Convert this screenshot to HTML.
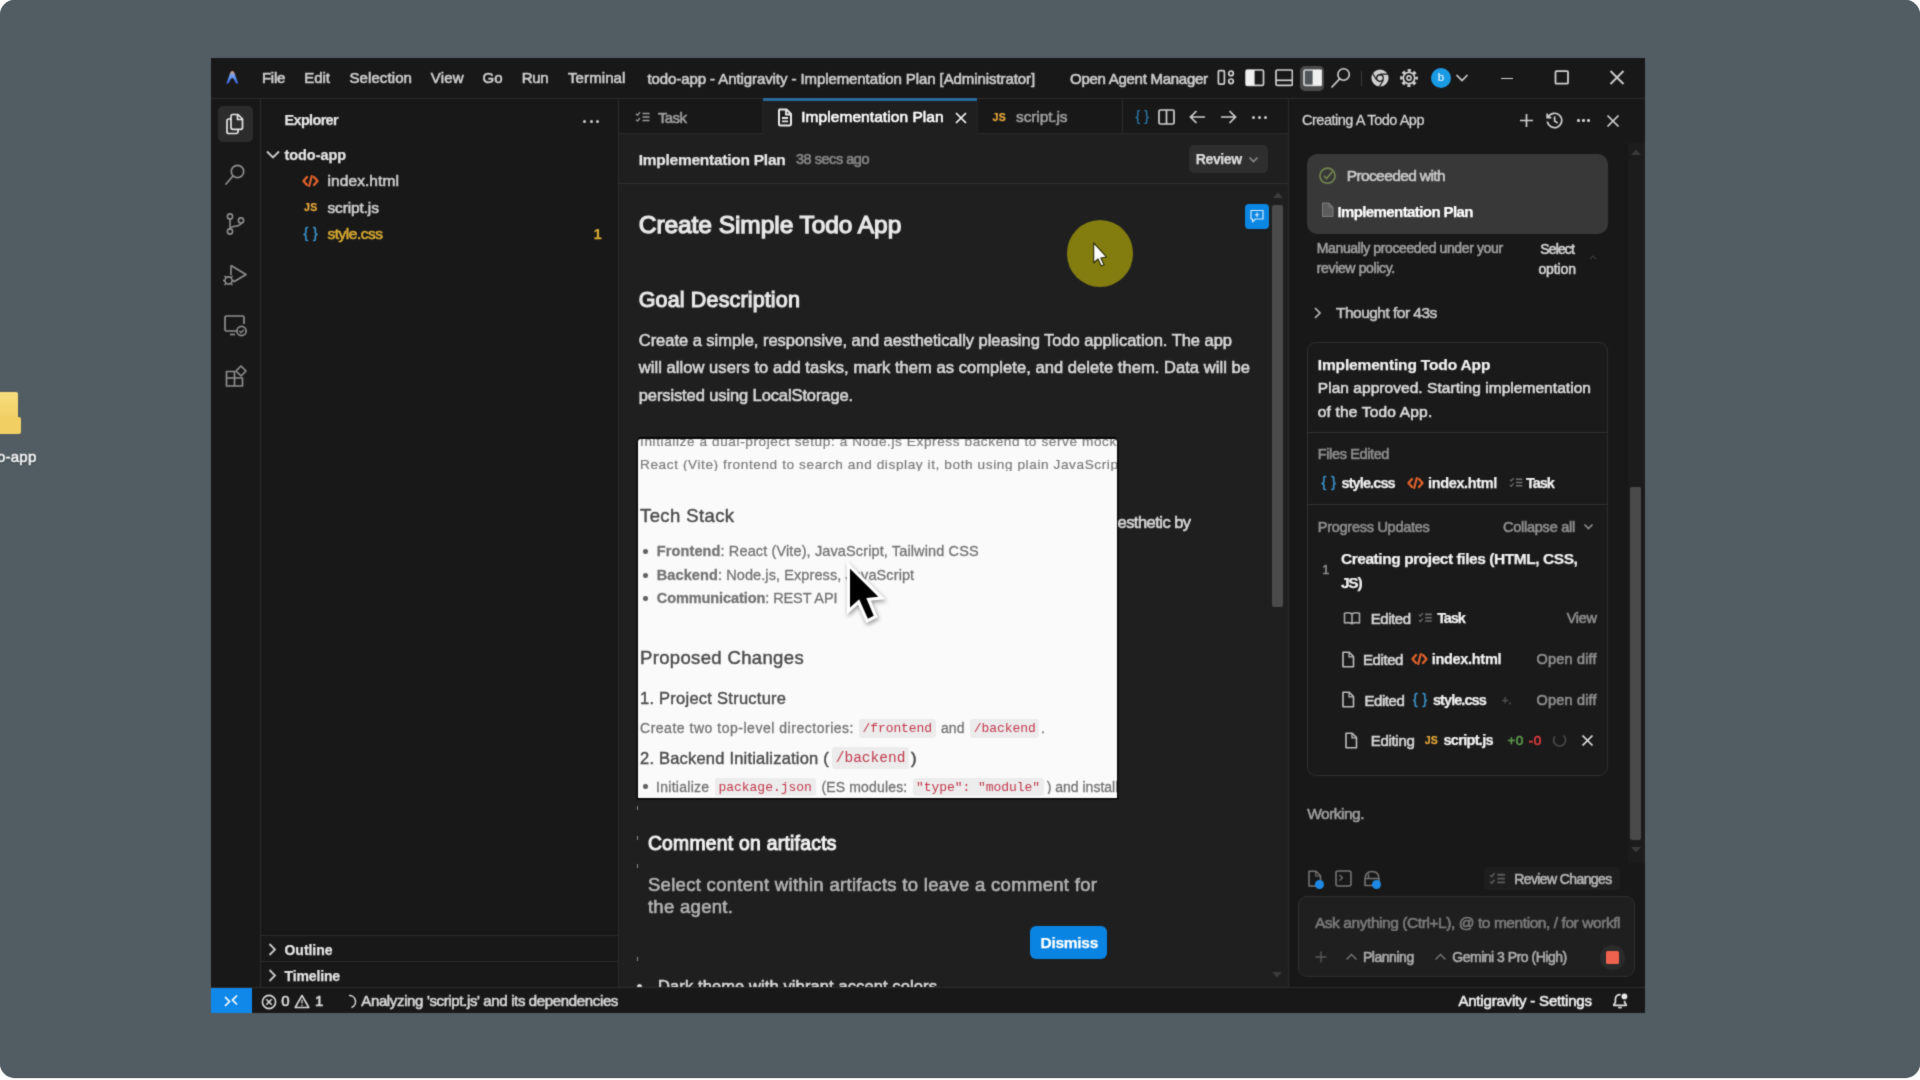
<!DOCTYPE html>
<html lang="en"><head><meta charset="utf-8"><title>todo-app - Antigravity - Implementation Plan</title>
<style>
html,body{margin:0;padding:0;background:#fff;}
body{width:1920px;height:1080px;position:relative;overflow:hidden;font-family:"Liberation Sans", sans-serif;}
.t{position:absolute;white-space:nowrap;line-height:1;display:block;-webkit-text-stroke:0.62px;}
.tb{-webkit-text-stroke:0.25px;}
#all{position:absolute;left:0;top:0;width:1920px;height:1080px;filter:url(#bl);}
.t b{font-weight:bold;}
</style></head><body>

<div style="position:absolute;left:0;top:0;width:1920px;height:1078.3px;background:#515d62;border-radius:15px;"></div>
<svg width="0" height="0" style="position:absolute"><filter id="bl" x="0" y="0" width="100%" height="100%" color-interpolation-filters="sRGB"><feConvolveMatrix order="3" kernelMatrix="0.0225 0.1050 0.0225 0.1050 0.4900 0.1050 0.0225 0.1050 0.0225" divisor="1" edgeMode="duplicate" preserveAlpha="false"/></filter></svg>
<div id="all">
<div style="position:absolute;left:0;top:0;width:1920px;height:1078.3px;background:#515d62;border-radius:15px;"></div>
<div style="position:absolute;left:-30px;top:392px;width:48px;height:41px;background:linear-gradient(180deg,#f7dd7c,#eec95a);border-radius:2px;"></div>
<div style="position:absolute;left:-30px;top:417px;width:50.5px;height:16.5px;background:#f1cf63;border-radius:0 2px 2px 0;"></div>
<div style="position:absolute;left:210.5px;top:57.5px;width:1434.5px;height:955px;background:#181818;"></div>
<div style="position:absolute;left:210.5px;top:98px;width:1434.5px;height:1px;background:#2b2b2b;"></div>
<div style="position:absolute;left:259.5px;top:98.5px;width:1px;height:889px;background:#2b2b2b;"></div>
<div style="position:absolute;left:617.5px;top:98.5px;width:1px;height:889px;background:#2b2b2b;"></div>
<div style="position:absolute;left:1287.5px;top:98.5px;width:1px;height:889px;background:#2b2b2b;"></div>
<div style="position:absolute;left:210.5px;top:987px;width:1434.5px;height:1px;background:#2b2b2b;"></div>
<div style="position:absolute;left:618.5px;top:99px;width:669px;height:888px;background:#1f1f1f;"></div>
<div style="position:absolute;left:618.5px;top:99px;width:669px;height:34px;background:#181818;"></div>
<div style="position:absolute;left:618.5px;top:132.5px;width:669px;height:1px;background:#2b2b2b;"></div>
<div style="position:absolute;left:762.5px;top:99px;width:214.5px;height:34.5px;background:#1f1f1f;"></div>
<div style="position:absolute;left:762.5px;top:98.4px;width:214.5px;height:2.2px;background:#2a6a9c;"></div>
<div style="position:absolute;left:762px;top:100.5px;width:1px;height:32px;background:#232323;"></div>
<div style="position:absolute;left:977px;top:100.5px;width:1px;height:32px;background:#232323;"></div>
<div style="position:absolute;left:1121.5px;top:99px;width:1px;height:34px;background:#2b2b2b;"></div>
<div style="position:absolute;left:618.5px;top:133.5px;width:669px;height:49px;background:#1f1f1f;"></div>
<div style="position:absolute;left:618.5px;top:182.5px;width:669px;height:1px;background:#2e2e2e;"></div>
<svg style="position:absolute;left:223.6px;top:69.6px;opacity:.95;" width="16.6" height="15" viewBox="0 0 18 17" fill="none"><defs><linearGradient id="lg" x1="0" y1="0" x2="0" y2="1"><stop offset="0" stop-color="#e8a27a"/><stop offset=".35" stop-color="#7aa7ff"/><stop offset="1" stop-color="#2f6df2"/></linearGradient></defs><path d="M9 1.2C10.6 1.2 11.4 3 12.2 5.6L15.8 15.6C14 15.9 12.9 14.6 11.8 12.4C10.9 10.6 10.2 9 9 9C7.8 9 7.1 10.6 6.2 12.4C5.1 14.6 4 15.9 2.2 15.6L5.8 5.6C6.6 3 7.4 1.2 9 1.2Z" fill="url(#lg)"/></svg>
<svg style="position:absolute;left:1217px;top:69px;" width="18" height="17" viewBox="0 0 18 17" fill="none"><rect x="1.4" y="1.6" width="6" height="13.6" rx="1.2" stroke="#d0d0d0" stroke-width="1.7"/><circle cx="14" cy="4.4" r="2.3" stroke="#d0d0d0" stroke-width="1.7"/><circle cx="14" cy="12.3" r="2.3" stroke="#d0d0d0" stroke-width="1.7"/></svg>
<svg style="position:absolute;left:1245px;top:69px;" width="19.5" height="17.5" viewBox="0 0 19.5 17.5" fill="none"><rect x="1" y="1" width="17.5" height="15.4" rx="1.5" stroke="#d0d0d0" stroke-width="1.7"/><rect x="1" y="1" width="8.6" height="15.4" fill="#f0f0f0"/></svg>
<svg style="position:absolute;left:1274.5px;top:69px;" width="18.5" height="17.5" viewBox="0 0 18.5 17.5" fill="none"><rect x="1" y="1" width="16.4" height="15.4" rx="1.5" stroke="#d0d0d0" stroke-width="1.7"/><path d="M1 11.3H17.4" stroke="#d0d0d0" stroke-width="1.7"/></svg>
<div style="position:absolute;left:1299.6px;top:66.2px;width:24.6px;height:24.4px;background:#4b4b4b;border-radius:5px;"></div>
<svg style="position:absolute;left:1302.8px;top:69px;" width="19.5" height="17.5" viewBox="0 0 19.5 17.5" fill="none"><rect x="1" y="1" width="17.5" height="15.4" rx="1.5" fill="#4f5559" stroke="#d0d0d0" stroke-width="1.7"/><rect x="9.6" y="1" width="8.9" height="15.4" fill="#f0f0f0"/></svg>
<svg style="position:absolute;left:1330px;top:67px;" width="21" height="22" viewBox="0 0 21 22" fill="none"><circle cx="13.6" cy="7.5" r="5.7" stroke="#d0d0d0" stroke-width="1.6"/><path d="M9.6 11.8L2 20" stroke="#d0d0d0" stroke-width="1.7" stroke-linecap="round"/></svg>
<div style="position:absolute;left:1361px;top:71px;width:1px;height:15px;background:#3c3c3c;"></div>
<svg style="position:absolute;left:1370px;top:68px;" width="20" height="20" viewBox="0 0 20 20" fill="none"><circle cx="10" cy="10" r="8.6" fill="#d0d0d0"/><circle cx="10" cy="10" r="3.9" fill="#1a1a1a"/><circle cx="10" cy="10" r="2.6" fill="#d0d0d0"/><path d="M10 6.1H18M6.6 12L2.6 5.2M13.4 12L9.4 18.6" stroke="#1a1a1a" stroke-width="1.2"/></svg>
<svg style="position:absolute;left:1398.8px;top:67.8px;" width="20" height="20" viewBox="0 0 20 20" fill="none"><circle cx="10" cy="10" r="7.6" stroke="#d0d0d0" stroke-width="2.6" stroke-dasharray="3.2 2.77" stroke-dashoffset="1.6"/><circle cx="10" cy="10" r="5.7" stroke="#d0d0d0" stroke-width="1.7"/><circle cx="10" cy="10" r="2.1" stroke="#d0d0d0" stroke-width="1.6"/></svg>
<div style="position:absolute;left:1431px;top:68px;width:20px;height:20px;background:#1a9be6;border-radius:50%;"></div>
<svg style="position:absolute;left:1455px;top:73px;" width="14" height="10" viewBox="0 0 14 10" fill="none"><path d="M1.5 2L7 7.5L12.5 2" stroke="#d0d0d0" stroke-width="1.7"/></svg>
<div style="position:absolute;left:1500.5px;top:77.5px;width:12.5px;height:1.8px;background:#d0d0d0;"></div>
<svg style="position:absolute;left:1554px;top:70px;" width="16" height="15" viewBox="0 0 16 15" fill="none"><rect x="1.5" y="1.2" width="12.5" height="12.5" rx="1" stroke="#d0d0d0" stroke-width="1.8"/></svg>
<svg style="position:absolute;left:1609px;top:70px;" width="16" height="15" viewBox="0 0 16 15" fill="none"><path d="M1.5 1L14.5 14M14.5 1L1.5 14" stroke="#d0d0d0" stroke-width="1.8"/></svg>
<div style="position:absolute;left:217.5px;top:106px;width:35.5px;height:35.5px;background:#2c2c2c;border-radius:5px;"></div>
<svg style="position:absolute;left:223px;top:112px;" width="24" height="24" viewBox="0 0 24 24" fill="none"><path d="M9.5 2.5H15L19.5 7V15.5A1.8 1.8 0 0 1 17.7 17.3H9.8A1.8 1.8 0 0 1 8 15.5V4.3A1.8 1.8 0 0 1 9.5 2.5Z M14.5 2.8V7.5H19.2" stroke="#e6e6e6" stroke-width="1.7" stroke-linejoin="round"/><path d="M8 7H5.8A1.8 1.8 0 0 0 4 8.8V19.7A1.8 1.8 0 0 0 5.8 21.5H13.2A1.8 1.8 0 0 0 15 19.7V17.5" stroke="#e6e6e6" stroke-width="1.7"/></svg>
<svg style="position:absolute;left:223px;top:162px;" width="24" height="24" viewBox="0 0 24 24" fill="none"><circle cx="14.5" cy="9.5" r="6.2" stroke="#8e8e8e" stroke-width="1.7"/><path d="M10 14L3 22" stroke="#8e8e8e" stroke-width="1.8" stroke-linecap="round"/></svg>
<svg style="position:absolute;left:223px;top:212px;" width="24" height="24" viewBox="0 0 24 24" fill="none"><circle cx="7" cy="4.5" r="2.6" stroke="#8e8e8e" stroke-width="1.6"/><circle cx="7" cy="19.5" r="2.6" stroke="#8e8e8e" stroke-width="1.6"/><circle cx="18" cy="8.5" r="2.6" stroke="#8e8e8e" stroke-width="1.6"/><path d="M7 7.2V16.8M18 11.2C18 15 7 13.5 7 16.8" stroke="#8e8e8e" stroke-width="1.6"/></svg>
<svg style="position:absolute;left:221px;top:262px;" width="28" height="26" viewBox="0 0 28 26" fill="none"><path d="M10 3.5L25 12.5L12.5 20" stroke="#8e8e8e" stroke-width="1.7" stroke-linejoin="round"/><circle cx="7.5" cy="18.5" r="3.6" stroke="#8e8e8e" stroke-width="1.6"/><path d="M2 18.5H4M11 18.5H13M3.5 14L5 15.5M11.5 14L10 15.5M3.5 23L5 21.5M11.5 23L10 21.5M10 3.5V13" stroke="#8e8e8e" stroke-width="1.6"/></svg>
<svg style="position:absolute;left:222px;top:313px;" width="27" height="25" viewBox="0 0 27 25" fill="none"><path d="M14 18H4.5A1.5 1.5 0 0 1 3 16.5V4.5A1.5 1.5 0 0 1 4.5 3H20.5A1.5 1.5 0 0 1 22 4.5V11" stroke="#8e8e8e" stroke-width="1.7"/><path d="M8 21.5H13" stroke="#8e8e8e" stroke-width="1.7"/><circle cx="19.5" cy="18" r="4.6" stroke="#8e8e8e" stroke-width="1.7"/><path d="M17.3 18L19 19.7L21.8 16.6" stroke="#8e8e8e" stroke-width="1.3"/></svg>
<svg style="position:absolute;left:223px;top:363px;" width="26" height="26" viewBox="0 0 26 26" fill="none"><path d="M3.5 8.5H11.5V23H3.5ZM11.5 15H19.5V23H11.5M3.5 15H11.5" stroke="#8e8e8e" stroke-width="1.7" stroke-linejoin="round"/><path d="M18 3L23 8L18 13L13 8Z" stroke="#8e8e8e" stroke-width="1.7" stroke-linejoin="round"/></svg>
<div style="position:absolute;left:583px;top:120px;width:3px;height:3px;background:#cccccc;border-radius:50%"></div>
<div style="position:absolute;left:589.5px;top:120px;width:3px;height:3px;background:#cccccc;border-radius:50%"></div>
<div style="position:absolute;left:596px;top:120px;width:3px;height:3px;background:#cccccc;border-radius:50%"></div>
<svg style="position:absolute;left:265px;top:149px;" width="16" height="12" viewBox="0 0 16 12" fill="none"><path d="M2 2.5L8 8.5L14 2.5" stroke="#cccccc" stroke-width="1.9"/></svg>
<svg style="position:absolute;left:302.3px;top:175.0px;" width="17.0" height="12.0" viewBox="0 0 17 12" fill="none"><path d="M5 2L1.5 6L5 10M12 2L15.5 6L12 10" stroke="#e2622c" stroke-width="2.3" stroke-linejoin="round" stroke-linecap="round"/><path d="M9.8 1L7.2 11" stroke="#e2622c" stroke-width="2.1" stroke-linecap="round"/></svg>
<div style="position:absolute;left:260.5px;top:935px;width:357px;height:1px;background:#2b2b2b;"></div>
<div style="position:absolute;left:260.5px;top:961px;width:357px;height:1px;background:#2b2b2b;"></div>
<svg style="position:absolute;left:267px;top:942px;" width="10" height="15" viewBox="0 0 10 15" fill="none"><path d="M2.5 2L8 7.5L2.5 13" stroke="#cccccc" stroke-width="1.8"/></svg>
<svg style="position:absolute;left:267px;top:968px;" width="10" height="15" viewBox="0 0 10 15" fill="none"><path d="M2.5 2L8 7.5L2.5 13" stroke="#cccccc" stroke-width="1.8"/></svg>
<svg style="position:absolute;left:634.5px;top:110.5px;" width="15.0" height="12.0" viewBox="0 0 15 12" fill="none"><path d="M1 2.8L2.5 4.3L5 1.2M1 8.6L2.5 10.1L5 7" stroke="#9d9d9d" stroke-width="1.3"/><path d="M7.5 2.5H14.5M7.5 6H14.5M7.5 9.5H14.5" stroke="#9d9d9d" stroke-width="1.6"/></svg>
<svg style="position:absolute;left:777px;top:107.5px;" width="16" height="19" viewBox="0 0 16 19" fill="none"><path d="M2.5 1.5H9.5L14 6V16A1.5 1.5 0 0 1 12.5 17.5H3.5A1.5 1.5 0 0 1 2 16V3A1.5 1.5 0 0 1 2.5 1.5Z" stroke="#ececec" stroke-width="2" stroke-linejoin="round"/><path d="M9 1.8V6.5H13.8" stroke="#ececec" stroke-width="1.8"/><path d="M5 10H11M5 13.3H11" stroke="#ececec" stroke-width="1.8"/></svg>
<svg style="position:absolute;left:953.5px;top:110.5px;" width="14" height="14" viewBox="0 0 14 14" fill="none"><path d="M2 2L12 12M12 2L2 12" stroke="#ffffff" stroke-width="1.6"/></svg>
<svg style="position:absolute;left:1158px;top:109px;" width="17" height="16" viewBox="0 0 17 16" fill="none"><rect x="1" y="1" width="15" height="14" rx="1.5" stroke="#d0d0d0" stroke-width="1.7"/><path d="M8.5 1V15" stroke="#d0d0d0" stroke-width="1.7"/></svg>
<svg style="position:absolute;left:1188.5px;top:110px;" width="17" height="14" viewBox="0 0 17 14" fill="none"><path d="M16 7H1.5M7.5 1L1.5 7L7.5 13" stroke="#d0d0d0" stroke-width="1.7"/></svg>
<svg style="position:absolute;left:1220px;top:110px;" width="17" height="14" viewBox="0 0 17 14" fill="none"><path d="M1 7H15.5M9.5 1L15.5 7L9.5 13" stroke="#d0d0d0" stroke-width="1.7"/></svg>
<div style="position:absolute;left:1251.5px;top:116px;width:3px;height:3px;background:#d0d0d0;border-radius:50%"></div>
<div style="position:absolute;left:1257.8px;top:116px;width:3px;height:3px;background:#d0d0d0;border-radius:50%"></div>
<div style="position:absolute;left:1264.1px;top:116px;width:3px;height:3px;background:#d0d0d0;border-radius:50%"></div>
<div style="position:absolute;left:1189px;top:145.3px;width:78.5px;height:27.7px;background:#2e2e2e;border-radius:5px;"></div>
<svg style="position:absolute;left:1248px;top:155.5px;" width="11" height="8" viewBox="0 0 11 8" fill="none"><path d="M1.5 1.5L5.5 5.5L9.5 1.5" stroke="#8a8a8a" stroke-width="1.6"/></svg>
<div style="position:absolute;left:1272.2px;top:205px;width:11px;height:402px;background:#4b4b4b;border-radius:2px;"></div>
<svg style="position:absolute;left:1272px;top:191px;" width="12" height="8" viewBox="0 0 12 8" fill="none"><path d="M6 1.5L11 7H1Z" fill="#3c3c3c"/></svg>
<svg style="position:absolute;left:1271px;top:971px;" width="12" height="8" viewBox="0 0 12 8" fill="none"><path d="M6 6.5L11 1H1Z" fill="#3c3c3c"/></svg>
<div style="position:absolute;left:1244.5px;top:203.6px;width:24.4px;height:25px;background:#0b86e2;border-radius:4px;"></div>
<svg style="position:absolute;left:1249px;top:208px;" width="16" height="16" viewBox="0 0 16 16" fill="none"><path d="M2 2.5H14V11H6.5L3.5 13.8V11H2Z" stroke="#d6ecff" stroke-width="1.2" stroke-linejoin="round"/><path d="M8 4.6V8.9M5.8 6.75H10.2" stroke="#d6ecff" stroke-width="1.2"/></svg>
<div style="position:absolute;left:638px;top:438.75px;width:479px;height:359.3px;background:#fafafa;border-radius:3px 3px 0 0;box-shadow:0 0 0 1.4px #050505;"></div>
<div style="position:absolute;left:643.3px;top:549.3px;width:4.6px;height:4.6px;background:#606060;border-radius:50%"></div>
<div style="position:absolute;left:643.3px;top:573.0px;width:4.6px;height:4.6px;background:#606060;border-radius:50%"></div>
<div style="position:absolute;left:643.3px;top:596.0999999999999px;width:4.6px;height:4.6px;background:#606060;border-radius:50%"></div>
<div style="position:absolute;left:858.6px;top:719px;width:77.4px;height:18.5px;background:#ececec;border-radius:3px"></div>
<div style="position:absolute;left:969.8px;top:719px;width:69px;height:18.5px;background:#ececec;border-radius:3px"></div>
<div style="position:absolute;left:831.8px;top:746.5px;width:77.2px;height:22px;background:#ececec;border-radius:3px"></div>
<div style="position:absolute;left:643.3px;top:784.4px;width:4.6px;height:4.6px;background:#606060;border-radius:50%"></div>
<div style="position:absolute;left:714.6px;top:777.5px;width:101.6px;height:18.5px;background:#ececec;border-radius:3px"></div>
<div style="position:absolute;left:912.5px;top:777.5px;width:131.5px;height:18.5px;background:#ececec;border-radius:3px"></div>
<div style="position:absolute;left:1030.3px;top:926px;width:77.2px;height:32.5px;background:#0a84e2;border-radius:6px;"></div>
<div style="position:absolute;left:637.3px;top:806px;width:1.2px;height:4px;background:#8a8a8a;"></div>
<div style="position:absolute;left:637.3px;top:836px;width:1.2px;height:4px;background:#8a8a8a;"></div>
<div style="position:absolute;left:637.3px;top:864px;width:1.2px;height:4px;background:#8a8a8a;"></div>
<div style="position:absolute;left:637.3px;top:957px;width:1.2px;height:4px;background:#8a8a8a;"></div>
<div style="position:absolute;left:637.3px;top:984px;width:5px;height:3.4px;background:#d6d6d6;border-radius:2.5px 2.5px 0 0"></div>
<svg style="position:absolute;left:1518.5px;top:113px;" width="15" height="15" viewBox="0 0 15 15" fill="none"><path d="M7.5 1V14M1 7.5H14" stroke="#d0d0d0" stroke-width="1.7"/></svg>
<svg style="position:absolute;left:1545px;top:111px;" width="19" height="19" viewBox="0 0 19 19" fill="none"><path d="M3.2 6A7.2 7.2 0 1 1 2.4 10.5" stroke="#d0d0d0" stroke-width="1.7"/><path d="M2.2 2.5V6.6H6.3" stroke="#d0d0d0" stroke-width="1.7"/><path d="M9.6 5.5V10L12.6 12" stroke="#d0d0d0" stroke-width="1.7"/></svg>
<div style="position:absolute;left:1577px;top:119.4px;width:2.6px;height:2.6px;background:#d0d0d0;border-radius:50%"></div>
<div style="position:absolute;left:1582.2px;top:119.4px;width:2.6px;height:2.6px;background:#d0d0d0;border-radius:50%"></div>
<div style="position:absolute;left:1587.4px;top:119.4px;width:2.6px;height:2.6px;background:#d0d0d0;border-radius:50%"></div>
<svg style="position:absolute;left:1605.5px;top:114px;" width="14" height="14" viewBox="0 0 14 14" fill="none"><path d="M1.5 1.5L12.5 12.5M12.5 1.5L1.5 12.5" stroke="#d0d0d0" stroke-width="1.7"/></svg>
<div style="position:absolute;left:1628px;top:143px;width:17px;height:720px;background:#1c1c1c;"></div>
<svg style="position:absolute;left:1630px;top:148px;" width="12" height="8" viewBox="0 0 12 8" fill="none"><path d="M6 1.5L11 7H1Z" fill="#3a3a3a"/></svg>
<svg style="position:absolute;left:1630px;top:846px;" width="12" height="8" viewBox="0 0 12 8" fill="none"><path d="M6 6.5L11 1H1Z" fill="#3a3a3a"/></svg>
<div style="position:absolute;left:1630px;top:487px;width:10.5px;height:352.5px;background:#4a4a4a;border-radius:2px;"></div>
<div style="position:absolute;left:1306.6px;top:153.9px;width:301px;height:80.5px;background:#383838;border-radius:10px;"></div>
<svg style="position:absolute;left:1318px;top:166px;" width="19" height="19" viewBox="0 0 19 19" fill="none"><circle cx="9.5" cy="9.7" r="7.6" stroke="#73864f" stroke-width="1.6"/><path d="M6 9.8L8.7 12.5L14.5 5.5" stroke="#73864f" stroke-width="1.7"/></svg>
<svg style="position:absolute;left:1321px;top:202px;" width="13" height="16" viewBox="0 0 13 16" fill="none"><path d="M1.5 1H8L12 5V14.5H1.5Z" fill="#5c5c5c" stroke="#7c7c7c" stroke-width="1"/><path d="M8 1V5H12" stroke="#7c7c7c" stroke-width="1"/></svg>
<svg style="position:absolute;left:1589px;top:255px;" width="8" height="5" viewBox="0 0 8 5" fill="none"><path d="M1 4L4 1L7 4" stroke="#3a3a3a" stroke-width="1.2"/></svg>
<svg style="position:absolute;left:1313px;top:306px;" width="9" height="14" viewBox="0 0 9 14" fill="none"><path d="M2 2L7 7L2 12" stroke="#b8b8b8" stroke-width="1.7"/></svg>
<div style="position:absolute;left:1307px;top:342px;width:298.5px;height:431.5px;border:1px solid #2f2f2f;border-radius:9px;background:#1a1a1a;"></div>
<div style="position:absolute;left:1308px;top:431.5px;width:298.5px;height:1px;background:#2f2f2f;"></div>
<svg style="position:absolute;left:1407px;top:477.2px;" width="17.0" height="12.0" viewBox="0 0 17 12" fill="none"><path d="M5 2L1.5 6L5 10M12 2L15.5 6L12 10" stroke="#e2622c" stroke-width="2.3" stroke-linejoin="round" stroke-linecap="round"/><path d="M9.8 1L7.2 11" stroke="#e2622c" stroke-width="2.1" stroke-linecap="round"/></svg>
<svg style="position:absolute;left:1509px;top:476.98px;" width="13.8" height="11.040000000000001" viewBox="0 0 15 12" fill="none"><path d="M1 2.8L2.5 4.3L5 1.2M1 8.6L2.5 10.1L5 7" stroke="#6f6f6f" stroke-width="1.3"/><path d="M7.5 2.5H14.5M7.5 6H14.5M7.5 9.5H14.5" stroke="#6f6f6f" stroke-width="1.6"/></svg>
<div style="position:absolute;left:1308px;top:504px;width:298.5px;height:1px;background:#2f2f2f;"></div>
<svg style="position:absolute;left:1583px;top:523px;" width="11" height="8" viewBox="0 0 11 8" fill="none"><path d="M1.5 1.5L5.5 5.5L9.5 1.5" stroke="#8c8c8c" stroke-width="1.7"/></svg>
<svg style="position:absolute;left:1342.5px;top:610.5px;" width="18" height="15" viewBox="0 0 18 15" fill="none"><path d="M9 3C7 1.6 4 1.6 1.5 2.2V12C4 11.4 7 11.4 9 12.8C11 11.4 14 11.4 16.5 12V2.2C14 1.6 11 1.6 9 3ZM9 3V13.5" stroke="#a8a8a8" stroke-width="1.6" stroke-linejoin="round"/></svg>
<svg style="position:absolute;left:1418px;top:611.8px;" width="14.25" height="11.399999999999999" viewBox="0 0 15 12" fill="none"><path d="M1 2.8L2.5 4.3L5 1.2M1 8.6L2.5 10.1L5 7" stroke="#6f6f6f" stroke-width="1.3"/><path d="M7.5 2.5H14.5M7.5 6H14.5M7.5 9.5H14.5" stroke="#6f6f6f" stroke-width="1.6"/></svg>
<svg style="position:absolute;left:1340.7px;top:650.9px;" width="14" height="17" viewBox="0 0 14 17" fill="none"><path d="M2 1.2H8.2L12.5 5.5V15.8H2Z" stroke="#bdbdbd" stroke-width="1.6" stroke-linejoin="round"/><path d="M8 1.4V5.8H12.3" stroke="#bdbdbd" stroke-width="1.3"/></svg>
<svg style="position:absolute;left:1410.5px;top:653.4px;" width="17.0" height="12.0" viewBox="0 0 17 12" fill="none"><path d="M5 2L1.5 6L5 10M12 2L15.5 6L12 10" stroke="#e2622c" stroke-width="2.3" stroke-linejoin="round" stroke-linecap="round"/><path d="M9.8 1L7.2 11" stroke="#e2622c" stroke-width="2.1" stroke-linecap="round"/></svg>
<svg style="position:absolute;left:1340.7px;top:691.4px;" width="14" height="17" viewBox="0 0 14 17" fill="none"><path d="M2 1.2H8.2L12.5 5.5V15.8H2Z" stroke="#bdbdbd" stroke-width="1.6" stroke-linejoin="round"/><path d="M8 1.4V5.8H12.3" stroke="#bdbdbd" stroke-width="1.3"/></svg>
<svg style="position:absolute;left:1344.3px;top:731.8px;" width="14" height="17" viewBox="0 0 14 17" fill="none"><path d="M2 1.2H8.2L12.5 5.5V15.8H2Z" stroke="#bdbdbd" stroke-width="1.6" stroke-linejoin="round"/><path d="M8 1.4V5.8H12.3" stroke="#bdbdbd" stroke-width="1.3"/></svg>
<svg style="position:absolute;left:1552px;top:733px;" width="15" height="15" viewBox="0 0 15 15" fill="none"><path d="M11.5 2.5A6 6 0 1 1 3 3.2" stroke="#4a4a4a" stroke-width="1.6"/></svg>
<svg style="position:absolute;left:1581px;top:734px;" width="13" height="13" viewBox="0 0 13 13" fill="none"><path d="M1.5 1.5L11.5 11.5M11.5 1.5L1.5 11.5" stroke="#e6e6e6" stroke-width="1.6"/></svg>
<svg style="position:absolute;left:1306.5px;top:869.5px;" width="16" height="18" viewBox="0 0 16 18" fill="none"><path d="M2 1.2H9L13.5 5.7V16H2Z" stroke="#747474" stroke-width="1.6" stroke-linejoin="round"/><path d="M8.8 1.4V6H13.3" stroke="#747474" stroke-width="1.2"/></svg>
<div style="position:absolute;left:1315.2px;top:879.5px;width:9px;height:9px;background:#1e88e5;border-radius:50%"></div>
<svg style="position:absolute;left:1334.5px;top:869.5px;" width="17" height="17" viewBox="0 0 17 17" fill="none"><rect x="1" y="1" width="15" height="15" rx="2" stroke="#747474" stroke-width="1.6"/><path d="M4.5 5L7.5 7.8L4.5 10.6" stroke="#747474" stroke-width="1.2"/></svg>
<svg style="position:absolute;left:1362.5px;top:869.5px;" width="18" height="18" viewBox="0 0 18 18" fill="none"><path d="M2 9C2 4 5 1.5 9 1.5C13 1.5 16 4 16 9V15.5H2Z" stroke="#747474" stroke-width="1.6"/><path d="M2 8.5H16M5.5 8.5V4" stroke="#747474" stroke-width="1.3"/></svg>
<div style="position:absolute;left:1372px;top:879.5px;width:9px;height:9px;background:#1e88e5;border-radius:50%"></div>
<div style="position:absolute;left:1483.5px;top:867px;width:136px;height:23px;background:#1e1e1e;border-radius:5px;"></div>
<svg style="position:absolute;left:1489px;top:871.9px;" width="16.5" height="13.200000000000001" viewBox="0 0 15 12" fill="none"><path d="M1 2.8L2.5 4.3L5 1.2M1 8.6L2.5 10.1L5 7" stroke="#5c5c5c" stroke-width="1.3"/><path d="M7.5 2.5H14.5M7.5 6H14.5M7.5 9.5H14.5" stroke="#5c5c5c" stroke-width="1.6"/></svg>
<div style="position:absolute;left:1297.5px;top:896px;width:335px;height:79px;border:1px solid #2d2d2d;border-radius:9px;background:#1f1f1f;"></div>
<svg style="position:absolute;left:1314.5px;top:951px;" width="12" height="12" viewBox="0 0 12 12" fill="none"><path d="M6 0.5V11.5M0.5 6H11.5" stroke="#5a5a5a" stroke-width="1.3"/></svg>
<svg style="position:absolute;left:1344.5px;top:953px;" width="13" height="8" viewBox="0 0 13 8" fill="none"><path d="M1.5 6.5L6.5 1.5L11.5 6.5" stroke="#7a7a7a" stroke-width="1.3"/></svg>
<svg style="position:absolute;left:1433.5px;top:953px;" width="13" height="8" viewBox="0 0 13 8" fill="none"><path d="M1.5 6.5L6.5 1.5L11.5 6.5" stroke="#7a7a7a" stroke-width="1.3"/></svg>
<div style="position:absolute;left:1600px;top:945px;width:24.5px;height:24.5px;background:#2b2b2b;border-radius:50%"></div>
<div style="position:absolute;left:1606px;top:951px;width:12.5px;height:12.5px;background:#ef624e;border-radius:1.5px"></div>
<div style="position:absolute;left:210.5px;top:987.5px;width:41px;height:25px;background:#1088ea;"></div>
<svg style="position:absolute;left:222px;top:993px;" width="18" height="16" viewBox="0 0 18 16" fill="none"><path d="M3 4L7.5 8.5L3 13M15 2.5L10.5 7L15 11.5" stroke="#ffffff" stroke-width="1.7"/></svg>
<svg style="position:absolute;left:260.5px;top:993.5px;" width="16" height="16" viewBox="0 0 16 16" fill="none"><circle cx="8" cy="8" r="6.6" stroke="#d8d8d8" stroke-width="1.6"/><path d="M5.3 5.3L10.7 10.7M10.7 5.3L5.3 10.7" stroke="#d8d8d8" stroke-width="1.6"/></svg>
<svg style="position:absolute;left:293.5px;top:993.5px;" width="16" height="15" viewBox="0 0 16 15" fill="none"><path d="M8 1.5L14.8 13.5H1.2Z" stroke="#d8d8d8" stroke-width="1.6" stroke-linejoin="round"/><path d="M8 5.8V9.6M8 10.8V12" stroke="#d8d8d8" stroke-width="1.3"/></svg>
<svg style="position:absolute;left:345px;top:993.5px;" width="13" height="15" viewBox="0 0 13 15" fill="none"><path d="M4 1.5A6.2 6.2 0 0 1 6.5 13.5" stroke="#d0d0d0" stroke-width="1.6"/></svg>
<svg style="position:absolute;left:1611px;top:992px;" width="18" height="18" viewBox="0 0 18 18" fill="none"><path d="M9.6 2.6A4.6 4.6 0 0 0 4.4 7.2V10.6L2.9 12.6V13.4H15.1V12.6L13.6 10.6V8.8" stroke="#e0e0e0" stroke-width="1.7" stroke-linejoin="round"/><path d="M7.2 15.6H10.8" stroke="#e0e0e0" stroke-width="1.6"/><circle cx="13.4" cy="4.4" r="2.9" fill="#e8e8e8"/></svg>
<span class="t" style="left:-24.50px;top:448.63px;font-size:15px;color:#f0f2f3;letter-spacing:0.223px;text-shadow:0 1px 2px rgba(0,0,0,.55);">todo-app</span>
<span class="t" style="left:262.00px;top:70.43px;font-size:15px;color:#cccccc;letter-spacing:-0.293px;">File</span>
<span class="t" style="left:304.25px;top:70.43px;font-size:15px;color:#cccccc;letter-spacing:-0.027px;">Edit</span>
<span class="t" style="left:349.50px;top:70.43px;font-size:15px;color:#cccccc;letter-spacing:0.087px;">Selection</span>
<span class="t" style="left:430.75px;top:70.43px;font-size:15px;color:#cccccc;letter-spacing:0.188px;">View</span>
<span class="t" style="left:482.50px;top:70.43px;font-size:15px;color:#cccccc;letter-spacing:-0.008px;">Go</span>
<span class="t" style="left:521.75px;top:70.43px;font-size:15px;color:#cccccc;letter-spacing:-0.344px;">Run</span>
<span class="t" style="left:568.00px;top:70.43px;font-size:15px;color:#cccccc;letter-spacing:0.102px;">Terminal</span>
<span class="t" style="left:647.50px;top:70.73px;font-size:15px;color:#cccccc;letter-spacing:-0.086px;">todo-app - Antigravity - Implementation Plan [Administrator]</span>
<span class="t" style="left:1070.00px;top:71.03px;font-size:15px;color:#cccccc;letter-spacing:-0.267px;">Open Agent Manager</span>
<span class="t" style="left:1437.80px;top:71.95px;font-size:11.5px;color:#ffffff;-webkit-text-stroke:0;">b</span>
<span class="t tb" style="left:284.50px;top:113.21px;font-size:14.4px;color:#e4e4e4;font-weight:bold;letter-spacing:-0.611px;">Explorer</span>
<span class="t tb" style="left:284.50px;top:148.17px;font-size:14.5px;color:#e4e4e4;font-weight:bold;letter-spacing:-0.064px;">todo-app</span>
<span class="t" style="left:327.50px;top:173.38px;font-size:15.5px;color:#cccccc;letter-spacing:0.084px;">index.html</span>
<span class="t tb" style="left:304.00px;top:202.39px;font-size:10.5px;color:#e5a63a;font-weight:bold;letter-spacing:0.328px;">JS</span>
<span class="t" style="left:327.50px;top:199.88px;font-size:15.5px;color:#cccccc;letter-spacing:-0.144px;">script.js</span>
<span class="t" style="left:303.50px;top:225.85px;font-size:14px;color:#3a93cc;letter-spacing:0.417px;-webkit-text-stroke:0.45px;">{ }</span>
<span class="t" style="left:327.50px;top:226.38px;font-size:15.5px;color:#d8aa32;letter-spacing:-0.493px;">style.css</span>
<span class="t tb" style="left:593.75px;top:227.12px;font-size:14px;color:#d8aa32;font-weight:bold;letter-spacing:-1.200px;">1</span>
<span class="t tb" style="left:284.50px;top:942.62px;font-size:14px;color:#e4e4e4;font-weight:bold;letter-spacing:-0.033px;">Outline</span>
<span class="t tb" style="left:284.50px;top:968.62px;font-size:14px;color:#e4e4e4;font-weight:bold;letter-spacing:-0.131px;">Timeline</span>
<span class="t" style="left:658.00px;top:109.63px;font-size:15px;color:#9d9d9d;letter-spacing:-0.648px;">Task</span>
<span class="t" style="left:801.25px;top:109.38px;font-size:15.5px;color:#ffffff;letter-spacing:0.062px;">Implementation Plan</span>
<span class="t tb" style="left:992.50px;top:112.39px;font-size:10.5px;color:#e5a63a;font-weight:bold;letter-spacing:0.328px;">JS</span>
<span class="t" style="left:1016.00px;top:109.38px;font-size:15.5px;color:#9d9d9d;letter-spacing:-0.116px;">script.js</span>
<span class="t" style="left:1135.60px;top:108.85px;font-size:14px;color:#2b7cab;letter-spacing:0.050px;-webkit-text-stroke:0.2px;">{ }</span>
<span class="t tb" style="left:638.75px;top:151.88px;font-size:15.5px;color:#e6e6e6;font-weight:bold;letter-spacing:-0.255px;">Implementation Plan</span>
<span class="t" style="left:796.00px;top:152.37px;font-size:14.5px;color:#858585;letter-spacing:-0.473px;">38 secs ago</span>
<span class="t tb" style="left:1195.80px;top:152.32px;font-size:14px;color:#dcdcdc;font-weight:bold;letter-spacing:-0.375px;">Review</span>
<span class="t" style="left:638.75px;top:213.26px;font-size:24.5px;color:#e8e8e8;letter-spacing:-0.058px;-webkit-text-stroke:1.25px;">Create Simple Todo App</span>
<span class="t" style="left:638.75px;top:290.40px;font-size:21.5px;color:#e8e8e8;letter-spacing:0.145px;-webkit-text-stroke:1.1px;">Goal Description</span>
<span class="t" style="left:638.75px;top:331.89px;font-size:16.5px;color:#d6d6d6;letter-spacing:-0.029px;">Create a simple, responsive, and aesthetically pleasing Todo application. The app</span>
<span class="t" style="left:638.75px;top:359.39px;font-size:16.5px;color:#d6d6d6;letter-spacing:0.061px;">will allow users to add tasks, mark them as complete, and delete them. Data will be</span>
<span class="t" style="left:638.75px;top:386.89px;font-size:16.5px;color:#d6d6d6;letter-spacing:-0.108px;">persisted using LocalStorage.</span>
<span class="t" style="left:1117.50px;top:514.19px;font-size:16.5px;color:#d6d6d6;letter-spacing:-0.534px;">esthetic by</span>
<span class="t" style="left:640.00px;top:435.39px;font-size:13.6px;color:#7c7c7c;width:477px;overflow:hidden;letter-spacing:0.6px;-webkit-text-stroke:0.2px;">Initialize a dual-project setup: a Node.js Express backend to serve mock data</span>
<span class="t" style="left:640.00px;top:457.82px;font-size:13.6px;color:#7c7c7c;width:477px;overflow:hidden;letter-spacing:0.6px;-webkit-text-stroke:0.2px;">React (Vite) frontend to search and display it, both using plain JavaScript</span>
<span class="t" style="left:640.00px;top:506.84px;font-size:18.5px;color:#4c4c4c;letter-spacing:0.400px;-webkit-text-stroke:0.45px #505050;">Tech Stack</span>
<span class="t" style="left:656.75px;top:544.12px;font-size:14.5px;color:#747474;letter-spacing:0.122px;-webkit-text-stroke:0.3px;"><b>Frontend</b>: React (Vite), JavaScript, Tailwind CSS</span>
<span class="t" style="left:656.75px;top:567.87px;font-size:14.5px;color:#747474;letter-spacing:0.098px;-webkit-text-stroke:0.3px;"><b>Backend</b>: Node.js, Express, JavaScript</span>
<span class="t" style="left:656.75px;top:590.87px;font-size:14.5px;color:#747474;letter-spacing:-0.082px;-webkit-text-stroke:0.3px;"><b>Communication</b>: REST API</span>
<span class="t" style="left:640.00px;top:649.21px;font-size:18.5px;color:#4c4c4c;letter-spacing:0.351px;-webkit-text-stroke:0.45px #505050;">Proposed Changes</span>
<span class="t" style="left:640.00px;top:690.49px;font-size:16.5px;color:#4c4c4c;letter-spacing:0.251px;-webkit-text-stroke:0.4px #4c4c4c;">1. Project Structure</span>
<span class="t" style="left:640.00px;top:721.12px;font-size:14px;color:#747474;letter-spacing:0.519px;-webkit-text-stroke:0.3px;">Create two top-level directories:</span>
<span class="t" style="left:862.50px;top:721.91px;font-size:13px;color:#c2384d;font-family:'Liberation Mono', monospace;-webkit-text-stroke:0;letter-spacing:-0.080px;">/frontend</span>
<span class="t" style="left:941.00px;top:721.12px;font-size:14px;color:#747474;letter-spacing:0.080px;-webkit-text-stroke:0.3px;">and</span>
<span class="t" style="left:973.75px;top:721.91px;font-size:13px;color:#c2384d;font-family:'Liberation Mono', monospace;-webkit-text-stroke:0;letter-spacing:-0.053px;">/backend</span>
<span class="t" style="left:1041.00px;top:721.12px;font-size:14px;color:#747474;-webkit-text-stroke:0.3px;">.</span>
<span class="t" style="left:640.00px;top:749.59px;font-size:16.5px;color:#4c4c4c;letter-spacing:0.206px;-webkit-text-stroke:0.4px #4c4c4c;">2. Backend Initialization (</span>
<span class="t" style="left:835.70px;top:750.87px;font-size:14.5px;color:#c2384d;font-family:'Liberation Mono', monospace;-webkit-text-stroke:0;letter-spacing:0.022px;">/backend</span>
<span class="t" style="left:911.00px;top:749.59px;font-size:16.5px;color:#4c4c4c;">)</span>
<span class="t" style="left:656.00px;top:779.72px;font-size:14px;color:#747474;letter-spacing:0.281px;-webkit-text-stroke:0.3px;">Initialize</span>
<span class="t" style="left:718.50px;top:780.61px;font-size:13px;color:#c2384d;font-family:'Liberation Mono', monospace;-webkit-text-stroke:0;letter-spacing:-0.027px;">package.json</span>
<span class="t" style="left:821.40px;top:779.72px;font-size:14px;color:#747474;letter-spacing:0.163px;-webkit-text-stroke:0.3px;">(ES modules:</span>
<span class="t" style="left:916.00px;top:780.61px;font-size:13px;color:#c2384d;font-family:'Liberation Mono', monospace;-webkit-text-stroke:0;letter-spacing:-0.052px;">"type": "module"</span>
<span class="t" style="left:1046.70px;top:779.72px;font-size:14px;color:#747474;width:70.3px;overflow:hidden;-webkit-text-stroke:0.3px;">) and install</span>
<span class="t" style="left:647.90px;top:834.11px;font-size:19.3px;color:#f0f0f0;letter-spacing:0.278px;-webkit-text-stroke:1.05px;">Comment on artifacts</span>
<span class="t" style="left:647.90px;top:876.21px;font-size:18.5px;color:#b2b2b2;letter-spacing:0.304px;">Select content within artifacts to leave a comment for</span>
<span class="t" style="left:647.90px;top:897.91px;font-size:18.5px;color:#b2b2b2;letter-spacing:0.300px;">the agent.</span>
<span class="t tb" style="left:1040.60px;top:934.68px;font-size:15.5px;color:#ffffff;font-weight:bold;letter-spacing:-0.293px;">Dismiss</span>
<span class="t" style="left:658.00px;top:978.03px;font-size:16.5px;color:#d6d6d6;letter-spacing:0.105px;height:9.4px;overflow:hidden;">Dark theme with vibrant accent colors</span>
<span class="t" style="left:1302.00px;top:112.57px;font-size:14.5px;color:#d2d2d2;letter-spacing:-0.482px;-webkit-text-stroke:0.3px #d2d2d2;">Creating A Todo App</span>
<span class="t" style="left:1346.70px;top:168.38px;font-size:15.5px;color:#c8c8c8;letter-spacing:-0.610px;">Proceeded with</span>
<span class="t tb" style="left:1337.40px;top:203.63px;font-size:15px;color:#ffffff;font-weight:bold;letter-spacing:-0.590px;">Implementation Plan</span>
<span class="t" style="left:1316.80px;top:241.02px;font-size:14px;color:#9c9c9c;letter-spacing:-0.380px;">Manually proceeded under your</span>
<span class="t" style="left:1316.80px;top:261.12px;font-size:14px;color:#9c9c9c;letter-spacing:-0.357px;">review policy.</span>
<span class="t" style="left:1540.30px;top:242.02px;font-size:14px;color:#cfcfcf;letter-spacing:-0.870px;">Select</span>
<span class="t" style="left:1538.40px;top:262.12px;font-size:14px;color:#cfcfcf;letter-spacing:-0.093px;">option</span>
<span class="t" style="left:1336.00px;top:305.18px;font-size:15.5px;color:#c4c4c4;letter-spacing:-0.519px;">Thought for 43s</span>
<span class="t tb" style="left:1317.80px;top:356.98px;font-size:15.5px;color:#f2f2f2;font-weight:bold;letter-spacing:-0.155px;">Implementing Todo App</span>
<span class="t" style="left:1317.80px;top:379.68px;font-size:15.5px;color:#dadada;letter-spacing:0.047px;">Plan approved. Starting implementation</span>
<span class="t" style="left:1317.80px;top:403.58px;font-size:15.5px;color:#dadada;letter-spacing:0.177px;">of the Todo App.</span>
<span class="t" style="left:1317.80px;top:446.77px;font-size:14.5px;color:#8c8c8c;letter-spacing:-0.380px;">Files Edited</span>
<span class="t" style="left:1321.60px;top:475.15px;font-size:14px;color:#3a93cc;letter-spacing:0.583px;-webkit-text-stroke:0.45px;">{ }</span>
<span class="t tb" style="left:1341.50px;top:475.57px;font-size:14.5px;color:#f2f2f2;font-weight:bold;letter-spacing:-0.887px;">style.css</span>
<span class="t tb" style="left:1428.00px;top:475.57px;font-size:14.5px;color:#f2f2f2;font-weight:bold;letter-spacing:-0.352px;">index.html</span>
<span class="t tb" style="left:1525.90px;top:475.57px;font-size:14.5px;color:#f2f2f2;font-weight:bold;letter-spacing:-1.021px;">Task</span>
<span class="t" style="left:1317.80px;top:519.87px;font-size:14.5px;color:#8c8c8c;letter-spacing:-0.273px;">Progress Updates</span>
<span class="t" style="left:1503.00px;top:519.87px;font-size:14.5px;color:#8c8c8c;letter-spacing:-0.247px;">Collapse all</span>
<span class="t" style="left:1322.60px;top:564.40px;font-size:12px;color:#8c8c8c;letter-spacing:-1.200px;">1</span>
<span class="t tb" style="left:1340.90px;top:551.18px;font-size:15.5px;color:#f2f2f2;font-weight:bold;letter-spacing:-0.438px;">Creating project files (HTML, CSS,</span>
<span class="t tb" style="left:1340.90px;top:574.78px;font-size:15.5px;color:#f2f2f2;font-weight:bold;letter-spacing:-1.175px;">JS)</span>
<span class="t" style="left:1370.70px;top:610.63px;font-size:15px;color:#d4d4d4;letter-spacing:-0.441px;">Edited</span>
<span class="t tb" style="left:1437.20px;top:610.87px;font-size:14.5px;color:#f2f2f2;font-weight:bold;letter-spacing:-1.146px;">Task</span>
<span class="t" style="left:1566.70px;top:611.17px;font-size:14.5px;color:#8c8c8c;letter-spacing:-0.268px;">View</span>
<span class="t" style="left:1363.00px;top:652.03px;font-size:15px;color:#d4d4d4;letter-spacing:-0.424px;">Edited</span>
<span class="t tb" style="left:1431.80px;top:652.27px;font-size:14.5px;color:#f2f2f2;font-weight:bold;letter-spacing:-0.312px;">index.html</span>
<span class="t" style="left:1536.50px;top:652.47px;font-size:14.5px;color:#8c8c8c;letter-spacing:0.190px;">Open diff</span>
<span class="t" style="left:1364.40px;top:692.53px;font-size:15px;color:#d4d4d4;letter-spacing:-0.424px;">Edited</span>
<span class="t" style="left:1413.00px;top:691.85px;font-size:14px;color:#3a93cc;letter-spacing:0.450px;-webkit-text-stroke:0.45px;">{ }</span>
<span class="t tb" style="left:1433.00px;top:692.77px;font-size:14.5px;color:#f2f2f2;font-weight:bold;letter-spacing:-0.942px;">style.css</span>
<span class="t" style="left:1502.00px;top:695.09px;font-size:11px;color:#4e4e4e;">+.</span>
<span class="t" style="left:1536.50px;top:692.97px;font-size:14.5px;color:#8c8c8c;letter-spacing:0.190px;">Open diff</span>
<span class="t" style="left:1370.70px;top:732.93px;font-size:15px;color:#d4d4d4;letter-spacing:-0.296px;">Editing</span>
<span class="t tb" style="left:1424.70px;top:735.39px;font-size:10.5px;color:#e5a63a;font-weight:bold;letter-spacing:0.328px;">JS</span>
<span class="t tb" style="left:1443.40px;top:733.17px;font-size:14.5px;color:#f2f2f2;font-weight:bold;letter-spacing:-0.668px;">script.js</span>
<span class="t" style="left:1507.50px;top:733.66px;font-size:13.5px;color:#5c9a4c;letter-spacing:0.297px;">+0</span>
<span class="t" style="left:1528.70px;top:733.66px;font-size:13.5px;color:#e23b3b;letter-spacing:0.442px;">-0</span>
<span class="t" style="left:1307.20px;top:805.88px;font-size:15.5px;color:#9c9c9c;letter-spacing:-0.509px;">Working.</span>
<span class="t" style="left:1514.30px;top:871.62px;font-size:14px;color:#b2b2b2;letter-spacing:-0.610px;">Review Changes</span>
<span class="t" style="left:1314.90px;top:915.28px;font-size:15.5px;color:#7a7a7a;width:305.5px;overflow:hidden;letter-spacing:-0.43px;">Ask anything (Ctrl+L), @ to mention, / for workflows</span>
<span class="t" style="left:1363.00px;top:949.72px;font-size:14px;color:#aaaaaa;letter-spacing:-0.475px;">Planning</span>
<span class="t" style="left:1452.30px;top:950.12px;font-size:14px;color:#aaaaaa;letter-spacing:-0.490px;">Gemini 3 Pro (High)</span>
<span class="t" style="left:281.25px;top:993.13px;font-size:15px;color:#d8d8d8;letter-spacing:-0.644px;">0</span>
<span class="t" style="left:315.00px;top:993.13px;font-size:15px;color:#d8d8d8;letter-spacing:-1.200px;">1</span>
<span class="t" style="left:361.25px;top:993.03px;font-size:15px;color:#d4d4d4;letter-spacing:-0.356px;">Analyzing 'script.js' and its dependencies</span>
<span class="t" style="left:1458.40px;top:993.13px;font-size:15px;color:#ececec;letter-spacing:-0.189px;">Antigravity - Settings</span>
<div style="position:absolute;left:1066.7px;top:220.1px;width:66.8px;height:66.8px;border-radius:50%;background:#837d10;"></div>
<svg style="position:absolute;left:1090px;top:240px" width="20" height="30" viewBox="0 0 20 30"><path d="M3.7 2.8L3.7 23L8 19L11.3 26L14 24.8L10.8 18L16.5 17Z" fill="#ffffff" stroke="#2a2806" stroke-width="1.1" stroke-linejoin="round"/></svg>
<div style="position:absolute;left:636px;top:426px;width:484px;height:11.4px;background:#1f1f1f;"></div>
<div style="position:absolute;left:639px;top:437.4px;width:477px;height:1.4px;background:#050505;"></div>
<svg style="position:absolute;left:840px;top:558px;filter:drop-shadow(1.5px 2.5px 2px rgba(0,0,0,.4))" width="56" height="76" viewBox="0 0 56 76"><path d="M10 10.75L10 49.5L19.2 41.2L27.9 60.75L33.75 57.8L26.25 39.9L38.3 38.7Z" fill="#000000" stroke="#ffffff" stroke-width="6.4" stroke-linejoin="miter" paint-order="stroke"/></svg>
</div></body></html>
